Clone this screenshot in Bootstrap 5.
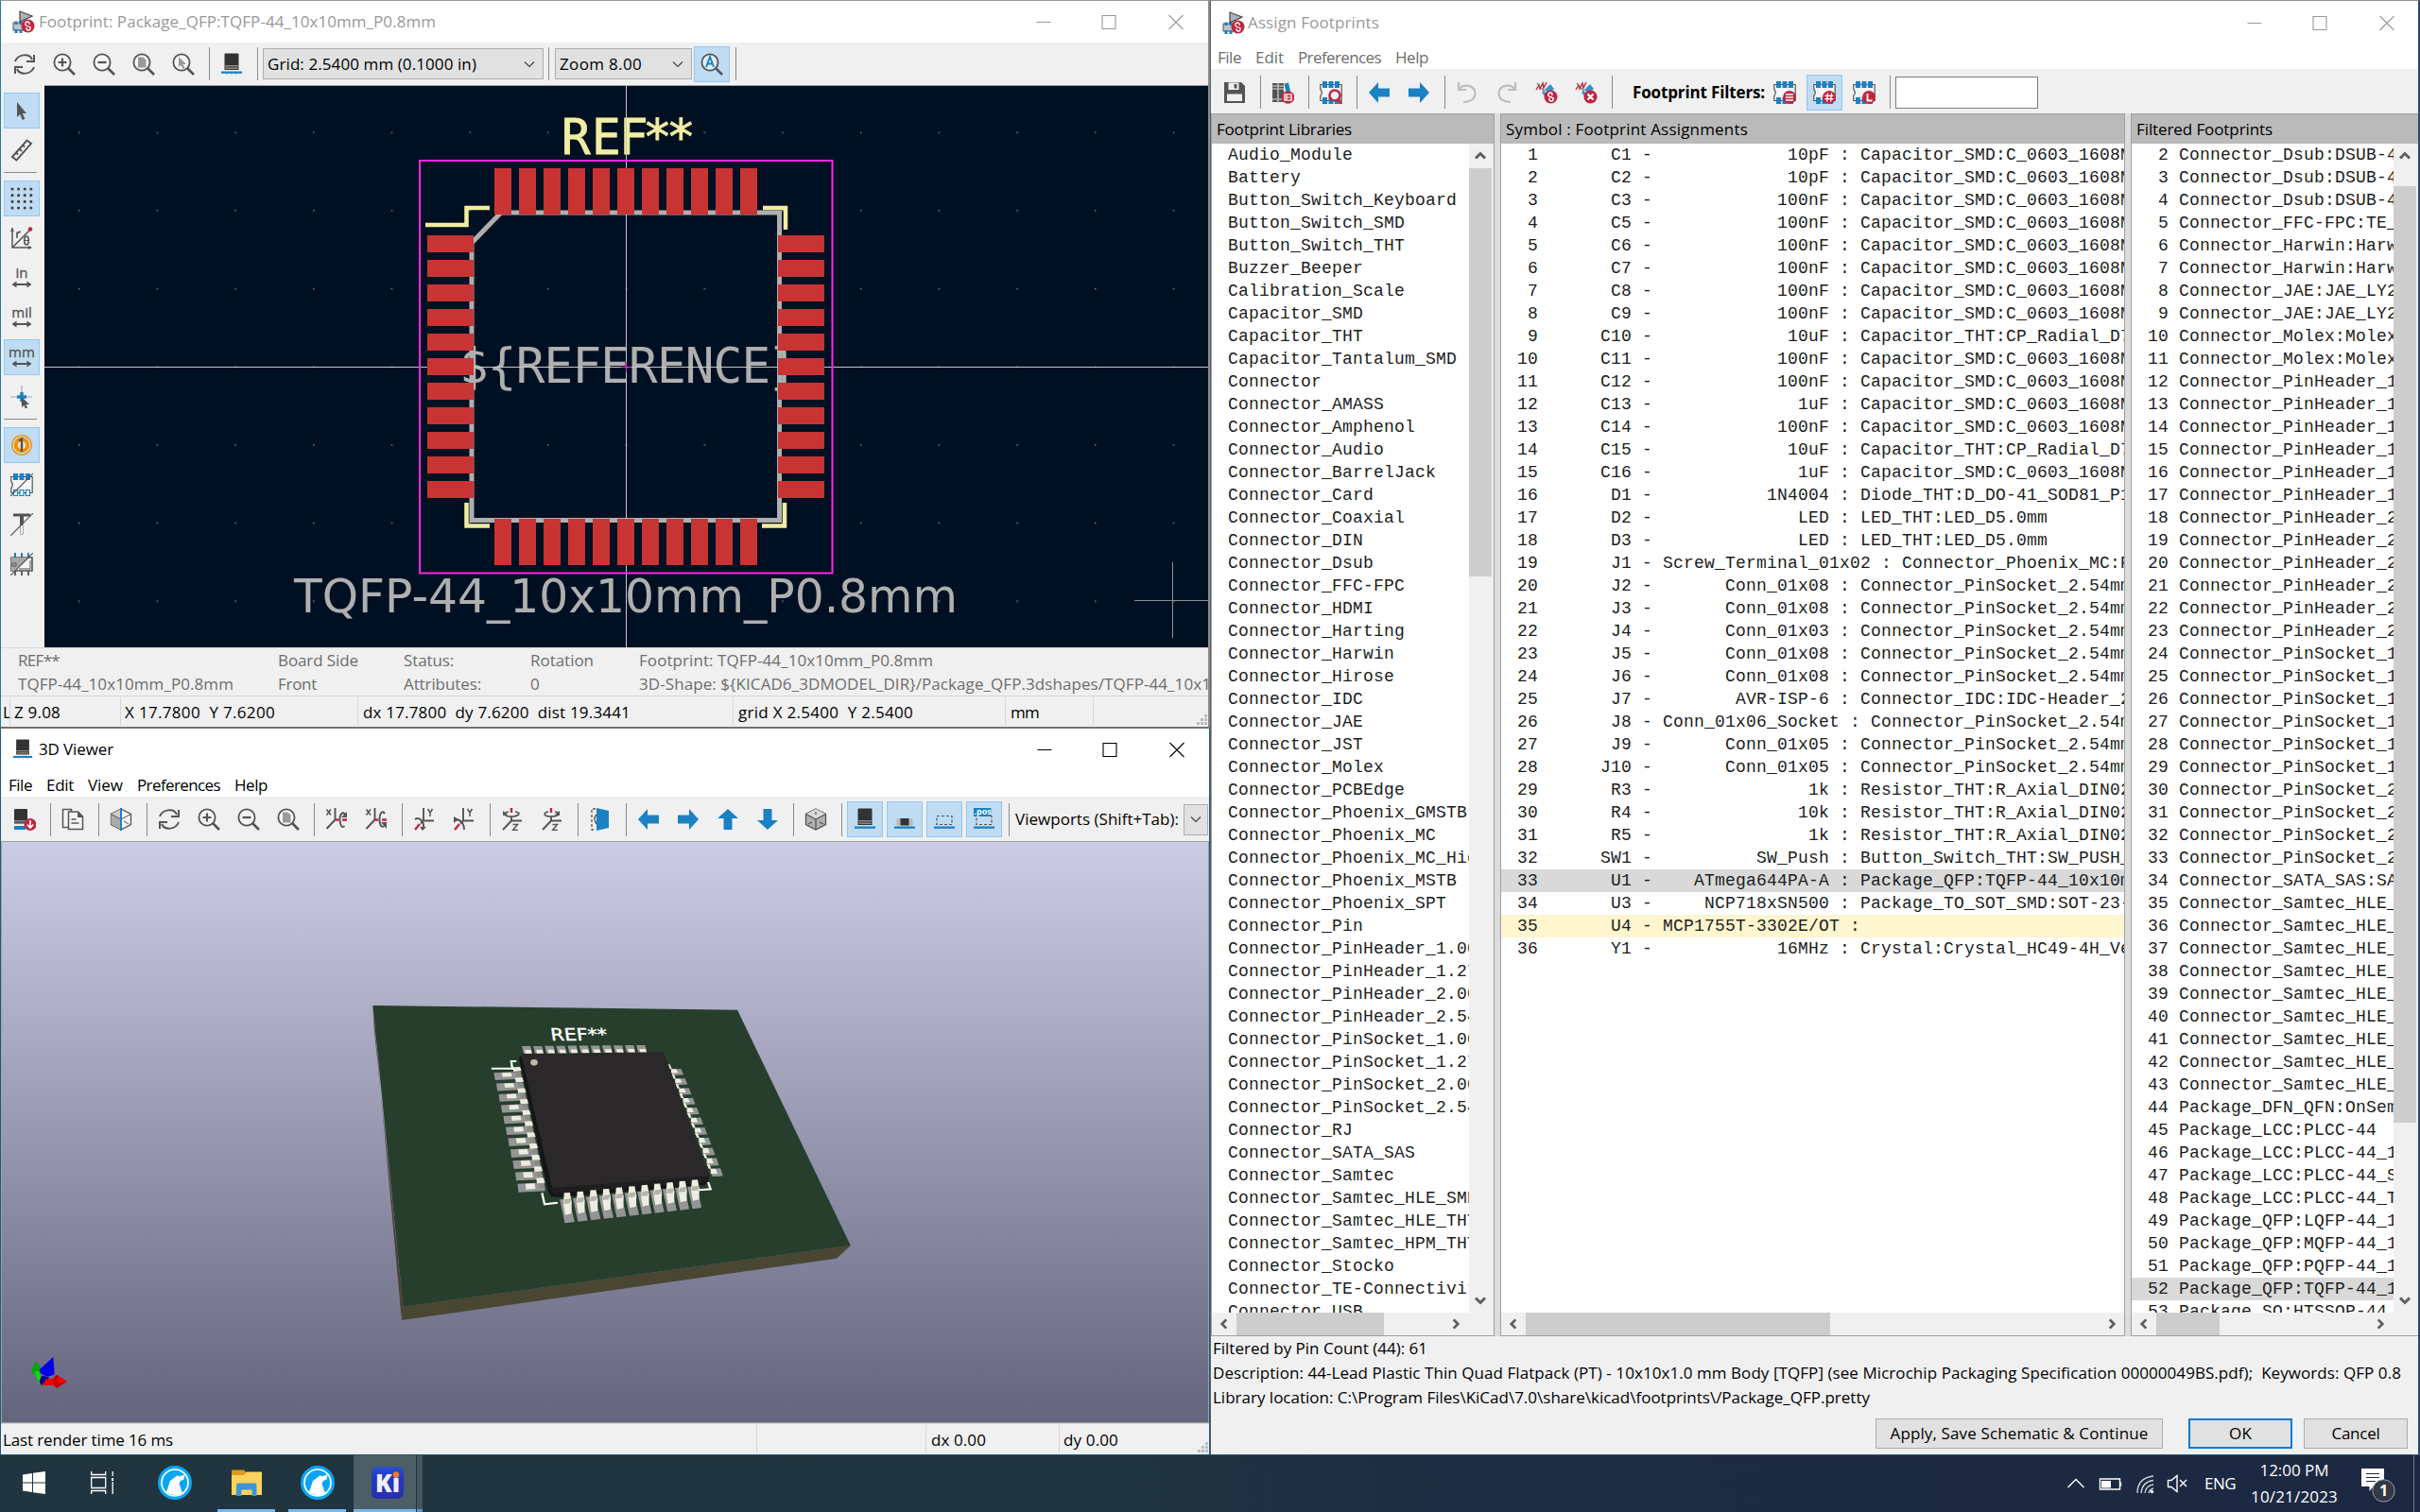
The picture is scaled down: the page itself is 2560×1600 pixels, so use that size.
<!DOCTYPE html>
<html lang="en">
<head>
<meta charset="utf-8">
<title>KiCad - Assign Footprints</title>
<link rel="stylesheet" href="https://cdn.jsdelivr.net/npm/bootstrap@5.3.0/dist/css/bootstrap.min.css">
<style>
html,body{width:2560px;height:1600px;overflow:hidden}
body{font-family:"Open Sans","Noto Sans",sans-serif;font-size:17px;line-height:24px;color:#000;background:#1f3440}
svg{display:block;flex:none}
.txt{white-space:pre;display:inline-block;flex:none}
.desk{height:1540px}
.leftcol{width:1280px}
.win{background:#f0f0f0;overflow:hidden}
.win-fp{height:771px;border-top:1px solid #9a9a9a;border-left:1px solid #2a76a0;border-right:2px solid #8c8c8c;border-bottom:2px solid #77706a}
.win-3d{height:769px;border-left:1px solid #1b5a7c;border-right:1px solid #1b5a7c;border-bottom:1px solid #1b5a7c}
.win-as{width:1280px;border-top:1px solid #8f8f8f;border-left:1px solid #55606a;border-right:2px solid #2c4678;border-bottom:1px solid #2a5580}
.titlebar{height:44px;background:#fff}
.off{color:#999}
.dim{color:#6d6d6d}
.menus{background:#fff}
.tools{gap:4px;padding-left:6px;flex:none}
.tb{width:38px;height:38px;flex:none;border:1px solid transparent}
.tb svg{overflow:visible}
.tb.on{background:#c0dcf3;border-color:#90c8f6}
.vsep{width:1px;height:35px;background:#8a8a8a;flex:none;margin:0 0 0 4px}
.hsep{width:35px;height:1px;background:#8a8a8a;flex:none}
.combo{height:33px;background:#e1e1e1;border:1px solid #adadad;flex:none}
.side{width:46px;padding:8px 0 0 3px;gap:4px;border-right:0;flex:none}
.info{height:51px;border-top:1px solid #dadada}
.info .txt{display:block;height:25px;line-height:26px}
.sbar{border-top:1px solid #d7d7d7;flex:none}
.sbar>div{height:30px;margin-top:1px;border-left:1px solid #d7d7d7;padding-left:5px;line-height:31px;flex:none}
.grip{width:14px;height:14px}
.panel{border:1px solid #a0a0a0;background:#f0f0f0;flex:none}
.phead{background:#bababa;height:31px;line-height:31px;padding-left:5px;flex:none}
.rows{background:#fff;font-family:"Liberation Mono",monospace;font-size:18px;letter-spacing:.2px;color:#1c1c1c;overflow:hidden;flex:none;height:1237px}
.rows div{height:24px;line-height:24px;white-space:pre}
.sel{background:#d9d9d9}
.warn{background:#fff5cf}
.vs{width:24px;height:1237px;flex:none}
.hs{height:24px;flex:none}
.thumb{background:#cdcdcd;flex:none}
.arr{flex:none;width:26px;height:26px}
.hs .arr{height:24px}
.b10{height:32px;line-height:30px;background:#e1e1e1;border:1px solid #adadad;border-radius:0;padding:0;font-size:17px;color:#000;flex:none}
.b10.def{border:2px solid #0078d7;line-height:28px}
.taskbar{height:60px;background:linear-gradient(90deg,#20353f 0,#203440 45%,#1c2c41 60%,#1c2842 100%);color:#fff}
.titem{height:60px;width:61px;flex:none;border-bottom:3px solid transparent}
.titem.run{border-color:#76b9ed}
.titem.act{background:#4d5f66;width:66px}
.fpsearch{width:151px;height:34px;border:1px solid #7a7a7a;background:#fff;border-radius:0}
</style>
<script src="https://cdn.jsdelivr.net/npm/bootstrap@5.3.0/dist/js/bootstrap.bundle.min.js"></script>
</head>
<body class="d-flex flex-column">

<svg width="0" height="0" class="position-absolute">
<defs>
<symbol id="refresh" viewBox="0 0 24 24"><g fill="none" stroke="#545454" stroke-width="2"><path d="M2 9C5 1 17 0 20 7M22 15C19 23 7 24 4 17"/><path d="M22 2v7h-8M2 22v-7h8"/></g></symbol>
<symbol id="lens" viewBox="0 0 24 24"><circle cx="10" cy="10" r="8.600" fill="#fafafa" fill-opacity=".6" stroke="#545454" stroke-width="1.800"/><path d="M16 16l7 7" stroke="#545454" stroke-width="2.600"/></symbol>
<symbol id="zin" viewBox="0 0 24 24"><use href="#lens"/><path d="M10 5.500v9M5.500 10h9" stroke="#545454" stroke-width="2.200"/></symbol>
<symbol id="zout" viewBox="0 0 24 24"><use href="#lens"/><path d="M5.500 10h9" stroke="#545454" stroke-width="2.200"/></symbol>
<symbol id="zfit" viewBox="0 0 24 24"><use href="#lens"/><path d="M6 4.500h5.500l3 3v8H6z" fill="#9a9a9a"/></symbol>
<symbol id="zsel" viewBox="0 0 24 24"><use href="#lens"/><path d="M7 4v11l2.500-2 2 4 2-1-2-4h3.500z" fill="#9a9a9a"/></symbol>
<symbol id="zauto" viewBox="0 0 24 24"><use href="#lens"/><path d="M6 15l4-11 4 11M7.300 11.500h5.400" fill="none" stroke="#1a81c4" stroke-width="1.900"/></symbol>
<symbol id="cap" viewBox="0 0 24 24"><path d="M7.500 19v5M12 19v5M16.500 19v5" stroke="#ccc" stroke-width="1"/><path d="M4.500 1.500q0-1 1-1h13q1 0 1 1V18h-15z" fill="#333"/><path d="M4.500 13h15v1.500h-15zM5.500 15.500h13V17h-13z" fill="#8a8a8a"/><path d="M1 19.500h22v2.300H1z" fill="#1a81c4"/></symbol>
<symbol id="capr" viewBox="0 0 24 24"><path d="M1 2q0-1 1-1h12q1 0 1 1v15H1z" fill="#333"/><path d="M1 13h14v1.500H1zM1 15.500h14V17H1z" fill="#8a8a8a"/><path d="M1 19h12v4H1z" fill="#1a81c4"/><circle cx="18" cy="17.500" r="6.500" fill="#bf2641"/><path d="M18 13v7.500M14.800 17.500L18 21l3.200-3.500" fill="none" stroke="#fff" stroke-width="1.600"/></symbol>
<symbol id="arrow" viewBox="0 0 24 24"><path d="M7 3v16l3.200-3 2.500 6 2.600-1.200-2.500-5.800H17z" fill="#545454"/></symbol>
<symbol id="ruler" viewBox="0 0 24 24"><g fill="none" stroke="#545454" stroke-width="1.900"><path d="M2 19L17.500 1.500 22 5 6.500 22.500z"/><path d="M6 14.500l2 2M9.500 10.500l2.500 2.500M13 6.500l2 2"/></g></symbol>
<symbol id="dots" viewBox="0 0 24 24"><g stroke="#444" stroke-width="3.200" stroke-linecap="round" stroke-dasharray="0 6.600"><path d="M2 2h20.500M2 8.700h20.500M2 15.300h20.500M2 22h20.500"/></g></symbol>
<symbol id="polar" viewBox="0 0 24 24"><path d="M2 1v21h20M2 22L21 3" fill="none" stroke="#545454" stroke-width="1.500"/><path d="M0 5l2-4 2 4zM19 20l4 2-4 2z" fill="#545454"/><circle cx="21" cy="2.500" r="2.300" fill="#bf2641"/><path d="M7 12V5.500M7 8q1-3 4-2.500" fill="none" stroke="#545454" stroke-width="1.600"/><ellipse cx="17" cy="14.500" rx="2.300" ry="4.500" fill="none" stroke="#545454" stroke-width="1.600"/><path d="M15 14.500h4" stroke="#545454"/></symbol>
<symbol id="dim" viewBox="0 0 24 24"><path d="M3 19h18" stroke="#545454" stroke-width="2"/><path d="M1.500 19l5-3.500v7zM22.500 19l-5-3.500v7z" fill="#545454"/></symbol>
<symbol id="snap" viewBox="0 0 24 24"><path d="M12 0v20M0 12h23" stroke="#aaa" stroke-width="1.200"/><path d="M12 7v10M7 12h10" stroke="#1a81c4" stroke-width="3.500"/><path d="M12 12v11l2.500-2 1.500 3.500 2-1-1.500-3.500H20z" fill="#545454"/></symbol>
<symbol id="padn" viewBox="0 0 24 24"><circle cx="12" cy="12" r="10.300" fill="none" stroke="#f29100" stroke-width="1.300"/><circle cx="12" cy="12" r="6.300" fill="#e9e3d6" stroke="#f29100" stroke-width="4"/><path d="M9 7.500l3-2V19" fill="none" stroke="#545454" stroke-width="2.400"/></symbol>
<symbol id="chip" viewBox="0 0 24 24"><path d="M.8 3.500h22.400v17H.8v-5q3-3.500 0-7z" fill="#f5f5f5" stroke="#545454" stroke-width="1.200"/><path d="M3 0h5v7H3zM9.500 0h5v7h-5zM16 0h5v7h-5zM3 17h5v7H3zM9.500 17h5v7h-5zM16 17h5v7h-5z" fill="#1a81c4"/></symbol>
<symbol id="padsk" viewBox="0 0 24 24"><path d="M.8 3.500h22.400v17H.8v-5q3-3.500 0-7z" fill="#f5f5f5" stroke="#545454" stroke-width="1.200"/><path d="M3 0h5v7H3zM9.500 0h5v7h-5zM16 0h5v7h-5z" fill="#1a81c4"/><path d="M3.500 17.500h4v6h-4zM10 17.500h4v6h-4zM16.500 17.500h4v6h-4z" fill="#fff" stroke="#1a81c4" stroke-width="1.200"/><path d="M0 24L24 0" stroke="#545454" stroke-width="1.200"/></symbol>
<symbol id="txtsk" viewBox="0 0 24 24"><path d="M3 2h18" stroke="#545454" stroke-width="3"/><path d="M12 2v11" stroke="#545454" stroke-width="4"/><path d="M10.500 13v9.500h3V10" fill="none" stroke="#aaa"/><path d="M0 24L24 0" stroke="#545454" stroke-width="1.200"/></symbol>
<symbol id="grask" viewBox="0 0 24 24"><path d="M5 0v6M12 0v6M19 0v6" stroke="#1a81c4" stroke-width="2"/><path d="M5 18v6M12 18v6M19 18v6" stroke="#545454" stroke-width="1.800"/><path d="M1 5h22v14H1z" fill="#f5f5f5" stroke="#545454" stroke-width="1.600"/><path d="M1 5h19L5 19H1z" fill="#a8a8a8"/><path d="M2 11h4v3H2zM9 17h12V8" fill="none" stroke="#545454"/><path d="M0 24L24 0" stroke="#545454" stroke-width="1.200"/></symbol>
<symbol id="copy" viewBox="0 0 24 24"><path d="M1.500 1.500h9v19h-9z" fill="#f5f5f5" stroke="#545454" stroke-width="1.500"/><path d="M7.500 4h10l5 5v13.500h-15z" fill="#f5f5f5" stroke="#545454" stroke-width="1.500"/><path d="M17 3.500V10h6z" fill="#545454"/><path d="M10.500 12h5M10.500 16h8" stroke="#545454" stroke-width="1.500"/></symbol>
<symbol id="cube1" viewBox="0 0 24 24"><path d="M12 1l10.500 5.500v11L12 23 1.500 17.500v-11z" fill="#f2f2f2" stroke="#545454" stroke-width="1.300"/><path d="M1.500 6.500L12 12v11L1.500 17.500z" fill="#aaa"/><path d="M1.500 6.500L12 1v11z" fill="#ccc"/><path d="M1.500 6.500L12 12l10.500-5.500M15 14l5 3" fill="none" stroke="#545454"/><path d="M12 0v24" stroke="#1a81c4" stroke-width="2"/></symbol>
<symbol id="cube2" viewBox="0 0 24 24"><path d="M12 1l10.500 5.500v11L12 23 1.500 17.500v-11z" fill="#b0b0b0" stroke="#545454" stroke-width="1.300"/><path d="M1.500 6.500L12 1l10.500 5.500L12 12z" fill="#dadada"/><path d="M1.500 6.500L12 12l10.500-5.500M12 12v11M4 17l4-2M20 17l-4-2M12 4v3" fill="none" stroke="#545454" stroke-width="1.200"/></symbol>
<symbol id="ax" viewBox="0 0 24 24"><path d="M10.500 0v13M10.500 12.500L1.500 22" stroke="#545454" stroke-width="1.900" fill="none"/><path d="M11 12.500h3.500M18 12.500h5" stroke="#bf2641" stroke-width="2.400"/><path d="M1.500 1.500l4.500 6M6 1.500l-4.500 6" stroke="#545454" stroke-width="1.500"/></symbol>
<symbol id="rx1" viewBox="0 0 24 24"><use href="#ax"/><path d="M21 7c-2-4-5.500-1-5.500 5s2.500 10 5 7" fill="none" stroke="#545454" stroke-width="1.900"/><path d="M23 4v6h-6z" fill="#545454"/></symbol>
<symbol id="rx2" viewBox="0 0 24 24"><use href="#ax"/><path d="M21 6c-2-4-5.500-1-5.500 6s2.500 9 5 7" fill="none" stroke="#545454" stroke-width="1.900"/><path d="M23 22v-7h-6z" fill="#545454"/></symbol>
<symbol id="ay" viewBox="0 0 24 24"><path d="M11 0v13.500h11M11 13.500l-3 3" stroke="#545454" stroke-width="1.900" fill="none"/><path d="M7 17l-5 6" stroke="#bf2641" stroke-width="2.400"/><path d="M15.500 1l2.500 4 2.500-4M18 5v4" fill="none" stroke="#545454" stroke-width="1.500"/></symbol>
<symbol id="ry1" viewBox="0 0 24 24"><use href="#ay"/><path d="M2 12c4-3 10 2 9 9" fill="none" stroke="#545454" stroke-width="1.900"/><path d="M7 20h7l-4 4z" fill="#545454"/></symbol>
<symbol id="ry2" viewBox="0 0 24 24"><use href="#ay"/><path d="M3 13c4-2 9 3 9 10" fill="none" stroke="#545454" stroke-width="1.900"/><path d="M1 16v-7l5 3z" fill="#545454"/></symbol>
<symbol id="az" viewBox="0 0 24 24"><path d="M11 0v5" stroke="#bf2641" stroke-width="2.400"/><path d="M11 9v4.500h11M11 13.500L2 23" stroke="#545454" stroke-width="1.900" fill="none"/><path d="M12.500 17.500h5l-5 6h5.500" fill="none" stroke="#545454" stroke-width="1.500"/></symbol>
<symbol id="rz1" viewBox="0 0 24 24"><use href="#az"/><path d="M8 4c-6 1-5 5 3 5s11-4 4-5" fill="none" stroke="#545454" stroke-width="1.700"/><path d="M2 8V3l5 4z" fill="#545454"/></symbol>
<symbol id="rz2" viewBox="0 0 24 24"><use href="#az"/><path d="M8 4c-6 1-5 5 3 5s11-4 4-5" fill="none" stroke="#545454" stroke-width="1.700"/><path d="M20 8V3l-5 4z" fill="#545454"/></symbol>
<symbol id="flip" viewBox="0 0 24 24"><path d="M7 1H3v22h4" fill="none" stroke="#545454" stroke-dasharray="3 2" stroke-width="1.300"/><path d="M8 0l13 3v18L8 24z" fill="#1a81c4"/><path d="M8 7q-4 4 0 10" fill="none" stroke="#545454" stroke-width="1.500"/></symbol>
<symbol id="aL" viewBox="0 0 24 24"><path d="M1 12L11 1v6.500h12v9H11V23z" fill="#1a81c4"/></symbol>
<symbol id="smd" viewBox="0 0 24 24"><path d="M3.500 11h17v7.500h-17z" fill="#bbb"/><path d="M7.500 11h9v7.500h-9z" fill="#333"/><path d="M1 19.500h22v2.300H1z" fill="#1a81c4"/></symbol>
<symbol id="virt" viewBox="0 0 24 24"><path d="M4 8.500h16v9H4z" fill="none" stroke="#545454" stroke-width="1.200" stroke-dasharray="3 2"/><path d="M1 19.500h22v2.300H1z" fill="#1a81c4"/></symbol>
<symbol id="pos" viewBox="0 0 24 24"><use href="#virt"/><path d="M1 0h18.500v9H1z" fill="#1a81c4"/><text x="1.500" y="7" font-size="9" font-weight="700" fill="#fff" font-family="Open Sans">.pos</text></symbol>
<symbol id="save" viewBox="0 0 24 24"><path d="M1 1h18l4 4v18H1z" fill="#545454"/><path d="M5.500 1.500h11V9h-11zM4 13.500h16V21H4z" fill="#f0f0f0"/><path d="M11.500 3h3v4.500h-3z" fill="#545454"/></symbol>
<symbol id="libs" viewBox="0 0 24 24"><path d="M1 2h5.500v20H1zM7.500 2H13v20H7.500z" fill="#545454"/><path d="M1 5h5.500M1 8h5.500M7.500 5H13M7.500 8H13M1 19h5.500M7.500 19H13" stroke="#ddd" stroke-width="1"/><path d="M13.500 2.500L18 1.500 22 19h-5z" fill="#1a81c4"/><circle cx="17.500" cy="17" r="6.800" fill="#bf2641"/><path d="M13.800 13.800h7.400v6.400h-7.400zM13.800 17h7.400M16 14v6" fill="none" stroke="#fff" stroke-width="1.200"/></symbol>
<symbol id="find" viewBox="0 0 24 24"><use href="#chip"/><circle cx="16" cy="15" r="5.500" fill="#f5f5f5" stroke="#bf2641" stroke-width="2.600"/><path d="M19.500 19l4 5" stroke="#bf2641" stroke-width="2.800"/></symbol>
<symbol id="undo" viewBox="0 0 24 24"><path d="M3 1v8h8M3.500 8.500C8 2 20 4 20.500 12.500c0 7-6 9.500-12.500 9.500" fill="none" stroke="#bdbdbd" stroke-width="2.200"/></symbol>
<symbol id="wire" viewBox="0 0 24 24"><path d="M1 9l3-5 1 4 3-6 1 5 3-6" fill="none" stroke="#bf2641" stroke-width="1.400"/><path d="M2 2l8 9" stroke="#777" stroke-width="1.200"/><path d="M7 12l9-9 4 5-9 9z" fill="#1a81c4" opacity=".85"/><path d="M10 10l6 5" stroke="#f0f0f0" stroke-width="1.500"/><circle cx="16.500" cy="16.500" r="7" fill="#bf2641"/></symbol>
<symbol id="wlink" viewBox="0 0 24 24"><use href="#wire"/><path d="M14 16v-2q0-2 2-2t2 2v1M15 18v1q0 2 2 2t2-2v-2M14.500 16l4 1.500" fill="none" stroke="#fff" stroke-width="1.500"/></symbol>
<symbol id="wdel" viewBox="0 0 24 24"><use href="#wire"/><path d="M13.500 13.500l6 6M19.500 13.500l-6 6" stroke="#fff" stroke-width="2.200"/></symbol>
<symbol id="f1" viewBox="0 0 24 24"><use href="#chip"/><circle cx="17" cy="17" r="7" fill="#bf2641"/><path d="M13 14h8M13 17h8M13 20h8" stroke="#fff" stroke-width="1.500"/></symbol>
<symbol id="f2" viewBox="0 0 24 24"><use href="#chip"/><circle cx="17" cy="17" r="7" fill="#bf2641"/><path d="M15.500 12.500l-.8 9M19.500 12.500l-.8 9M12.500 15.300h9M12.500 18.700h9" stroke="#fff" stroke-width="1.300"/></symbol>
<symbol id="f3" viewBox="0 0 24 24"><use href="#chip"/><circle cx="17" cy="17" r="7" fill="#bf2641"/><path d="M15.500 13v7.500h5" fill="none" stroke="#fff" stroke-width="1.800"/></symbol>
<symbol id="app" viewBox="0 0 24 24"><path d="M1 13h17v8H1z" fill="#b9c4cc" stroke="#545454"/><path d="M2.500 11.500h3v3.500h-3zM7.500 11.500h3v3.500h-3zM2.500 20h3v4h-3zM7.500 20h3v4h-3z" fill="#1a81c4"/><path d="M8 1v11L21 6z" fill="#a9b4bc" stroke="#444" stroke-width="1.200"/><circle cx="16.500" cy="16.500" r="7" fill="#bf2641"/><path d="M14 16v-2q0-2 2-2t2 2v1M15 18v1q0 2 2 2t2-2v-2M14.500 16l4 1.500" fill="none" stroke="#fff" stroke-width="1.300"/></symbol>
<symbol id="chev" viewBox="0 0 12 12"><path d="M1 3.500l5 5 5-5" fill="none" stroke="#444" stroke-width="1.200"/></symbol>
<symbol id="sarr" viewBox="0 0 26 26"><path d="M8 15.500l5-5 5 5" fill="none" stroke="#5e5e5e" stroke-width="3"/></symbol>
<symbol id="wctl" viewBox="0 0 210 44"><path d="M28.500 22.500h15M98 15.500h14v14H98zM168.500 15l15 15M183.500 15l-15 15" fill="none" stroke="currentColor" stroke-width="1.100"/></symbol>
<symbol id="wolf" viewBox="0 0 36 36"><circle cx="18" cy="18" r="18" fill="#0aa5f5"/><circle cx="18" cy="18" r="14" fill="none" stroke="#fff" stroke-width="1.700"/><path d="M9 28l4-12 6-4.500 2-1.500 1 1.500 6.500-2-1 5-3.500 1.500-1.500 3 3.500 10q-8 5-17-1z" fill="#fff"/></symbol>
<symbol id="grip" viewBox="0 0 14 14"><path d="M10 2h3v3h-3zM10 6h3v3h-3zM10 10h3v3h-3zM6 6h3v3H6zM6 10h3v3H6zM2 10h3v3H2z" fill="#bdbdbd"/></symbol>
</defs>
</svg>

<main class="desk d-flex">
<section class="leftcol d-flex flex-column flex-shrink-0">

<div class="win win-fp d-flex flex-column flex-shrink-0">
  <div class="titlebar d-flex align-items-center off flex-shrink-0">
    <svg class="ms-2 ps-1" width="28" height="24"><use href="#app" width="24" height="24"/></svg>
    <span class="txt" style="margin-left:4px" data-w="420">Footprint: Package_QFP:TQFP-44_10x10mm_P0.8mm</span>
    <svg class="ms-auto" width="210" height="44"><use href="#wctl"/></svg>
  </div>
  <div class="tools d-flex align-items-center" style="height:45px">
    <span class="tb" data-i="refresh"></span><span class="tb" data-i="zin"></span><span class="tb" data-i="zout"></span><span class="tb" data-i="zfit"></span><span class="tb" data-i="zsel"></span>
    <i class="vsep"></i><span class="tb" data-i="cap"></span><i class="vsep"></i>
    <span class="combo d-flex align-items-center justify-content-between ps-1 pe-2" style="width:297px;margin:0 -3px 0 1px"><span class="txt" data-w="221">Grid: 2.5400 mm (0.1000 in)</span><svg width="12" height="12"><use href="#chev"/></svg></span>
    <i class="vsep"></i>
    <span class="combo d-flex align-items-center justify-content-between ps-1 pe-2" style="width:145px;margin-left:2px"><span class="txt" data-w="87">Zoom 8.00</span><svg width="12" height="12"><use href="#chev"/></svg></span>
    <span class="tb on" data-i="zauto" style="margin-left:-2px"></span><i class="vsep" style="margin-left:2px"></i>
  </div>
  <div class="d-flex" style="height:595px">
    <div class="side d-flex flex-column">
      <span class="tb on" data-i="arrow"></span><span class="tb" data-i="ruler"></span>
      <i class="hsep mb-1"></i>
      <span class="tb on" data-i="dots"></span><span class="tb" data-i="polar"></span>
      <span class="tb" data-i="dim" data-t="in"></span><span class="tb" data-i="dim" data-t="mil"></span><span class="tb on" data-i="dim" data-t="mm"></span>
      <span class="tb" data-i="snap"></span>
      <i class="hsep mb-1"></i>
      <span class="tb on" data-i="padn"></span><span class="tb" data-i="padsk"></span><span class="tb" data-i="txtsk"></span><span class="tb" data-i="grask"></span>
    </div>
    <svg id="pcb" width="1231" height="595" viewBox="47 90 1231 595" style="background:#001023">
      <defs><pattern id="gd" x="82.900" y="139.500" width="82.700" height="82.650" patternUnits="userSpaceOnUse"><path d="M0 0h1.500v1.500H0z" fill="#7a8088"/></pattern></defs>
      <path d="M47 90h1231v595H47z" fill="url(#gd)"/>
      <path d="M47 90.500h1231" stroke="#a0a0a0"/>
      <g fill="none" stroke="#afafaf" stroke-width="5"><path d="M530 225H824.500V550.500H499V257z"/></g>
      <g font-family="DejaVu Sans Mono" font-size="51" fill="#afafaf">
        <text x="486" y="405" textLength="359">${REFERENCE}</text>
        <text x="311" y="648" textLength="702" lengthAdjust="spacingAndGlyphs" font-family="DejaVu Sans" font-size="50.500">TQFP-44_10x10mm_P0.8mm</text>
        <text x="594 626 655 680 705" y="163" fill="#f2eda1" stroke="#f2eda1" stroke-width=".8">REF**</text>
      </g>
      <g fill="none" stroke="#f2eda1" stroke-width="4.500"><path d="M450 238h43.500v-18H518M807 220h24v23M493.500 532v24.500H518M806 556.500h24V532"/></g>
      <path d="M47 388.500h1231M662.500 90v595" stroke="#c8c8c8"/>
      <path d="M657 388.500h11M662.500 383v11" stroke="#ff26e2"/>
      <g id="pads" fill="#c83434"></g>
      <path d="M444 170h436.500v436.500H444z" fill="none" stroke="#ff26e2" stroke-width="2"/>
      <path d="M1200 635.500h78M1240.500 595v80" stroke="#8b9096"/>
    </svg>
  </div>
  <div class="info d-flex dim">
    <div style="width:275px;padding-left:18px"><span class="txt" data-w="44">REF**</span><span class="txt" data-w="228">TQFP-44_10x10mm_P0.8mm</span></div>
    <div style="width:133px;padding-left:18px"><span class="txt" data-w="85">Board Side</span><span class="txt" data-w="41">Front</span></div>
    <div style="width:134px;padding-left:18px"><span class="txt" data-w="53">Status:</span><span class="txt" data-w="82">Attributes:</span></div>
    <div style="width:115px;padding-left:18px"><span class="txt" data-w="67">Rotation</span><span class="txt">0</span></div>
    <div style="width:615px;padding-left:18px"><span class="txt" data-w="311">Footprint: TQFP-44_10x10mm_P0.8mm</span><span class="txt" data-w="605">3D-Shape: ${KICAD6_3DMODEL_DIR}/Package_QFP.3dshapes/TQFP-44_10x1</span></div>
  </div>
  <div class="sbar d-flex" style="height:33px">
    <div style="width:9px;border:0;padding-left:2px">L</div>
    <div style="width:117px;padding-left:4px"><span class="txt" data-w="49">Z 9.08</span></div>
    <div style="width:251px;padding-left:4px"><span class="txt" data-w="159">X 17.7800  Y 7.6200</span></div>
    <div style="width:397px"><span class="txt" data-w="283">dx 17.7800  dy 7.6200  dist 19.3441</span></div>
    <div style="width:288px"><span class="txt" data-w="185">grid X 2.5400  Y 2.5400</span></div>
    <div style="width:93px"><span class="txt" data-w="30">mm</span></div>
    <div class="flex-fill d-flex justify-content-end align-items-end"><svg class="grip"><use href="#grip"/></svg></div>
  </div>
</div>

<div class="win win-3d d-flex flex-column flex-shrink-0">
  <div class="titlebar d-flex align-items-center flex-shrink-0">
    <svg class="ms-2 ps-1" width="28" height="24"><use href="#cap" width="22" height="24"/></svg>
    <span class="txt" style="margin-left:4px" data-w="79">3D Viewer</span>
    <svg class="ms-auto" width="210" height="44"><use href="#wctl"/></svg>
  </div>
  <div class="menus d-flex flex-shrink-0" style="height:28px;line-height:31px;padding-left:8px;gap:15px"><span class="txt" data-w="25">File</span><span class="txt" data-w="29">Edit</span><span class="txt" data-w="37">View</span><span class="txt" data-w="88">Preferences</span><span class="txt" data-w="35">Help</span></div>
  <div class="tools d-flex align-items-center" style="height:47px;padding-top:1px">
    <span class="tb" data-i="capr"></span><i class="vsep"></i><span class="tb" data-i="copy"></span><i class="vsep"></i><span class="tb" data-i="cube1"></span><i class="vsep"></i>
    <span class="tb" data-i="refresh"></span><span class="tb" data-i="zin"></span><span class="tb" data-i="zout"></span><span class="tb" data-i="zfit"></span><i class="vsep"></i>
    <span class="tb" data-i="rx1"></span><span class="tb" data-i="rx2"></span><i class="vsep"></i><span class="tb" data-i="ry1"></span><span class="tb" data-i="ry2"></span><i class="vsep"></i><span class="tb" data-i="rz1"></span><span class="tb" data-i="rz2"></span><i class="vsep"></i>
    <span class="tb" data-i="flip"></span><i class="vsep"></i>
    <span class="tb" data-i="aL"></span><span class="tb" data-i="aL" data-r="180"></span><span class="tb" data-i="aL" data-r="90"></span><span class="tb" data-i="aL" data-r="270"></span><i class="vsep"></i>
    <span class="tb" data-i="cube2"></span><i class="vsep"></i>
    <span class="tb on" data-i="cap" style="margin-left:1px"></span><span class="tb on" data-i="smd"></span><span class="tb on" data-i="virt"></span><span class="tb on" data-i="pos"></span><i class="vsep" style="margin-left:3px"></i>
    <span class="txt" style="margin-left:2px" data-w="173">Viewports (Shift+Tab):</span>
    <span class="combo d-flex align-items-center justify-content-center" style="width:26px;margin-left:1px"><svg width="12" height="12"><use href="#chev"/></svg></span>
  </div>
  <svg id="view3d" width="1278" height="616" viewBox="1 890 1278 616">
    <defs><linearGradient id="sky" x1="0" y1="0" x2="0" y2="1"><stop offset="0" stop-color="#cccce5"/><stop offset="1" stop-color="#64647d"/></linearGradient></defs>
    <path d="M1 890h1278v616H1z" fill="url(#sky)"/><path d="M1.500 1505.500V890.500h1277v615z" fill="none" stroke="#a0a0a0"/>
    <g transform="translate(340,1030) scale(.38265,.33333)">
      <path d="M142 102L146 180 226 1058 222 1101z" fill="#4b3f33"/>
      <path d="M226 1058L1463 864 1424 905 222 1101z" fill="#494632"/>
      <path d="M142 102L1150 116 1463 864 226 1058z" fill="#273e2d"/>
      <text transform="matrix(1,0,.12,1,636,212)" font-family="DejaVu Sans" font-size="54" fill="#fff" textLength="156" lengthAdjust="spacingAndGlyphs" stroke="#fff" stroke-width="1.200">REF**</text>
      <g id="leads"></g>
      <path d="M546 268L560 256 940 290 1072 640 1070 660 1060 672 650 712 634 708 626 690z" fill="#161616"/>
      <path d="M632 680L1070 640 1070 660 1062 664 644 699z" fill="#1f1e1f"/>
      <path d="M553 262L560 255 942 250 949 258 1071 639 1066 643 646 681 637 678z" fill="#2b2829"/>
      <circle cx="588" cy="283" r="10" fill="#bdb9a2"/>
      <g id="leads2"></g>
      <g fill="none" stroke="#fff" stroke-width="6"><path d="M470 302h60M528 306l-3-27h14M610 697l7 36 36-5M1045 688l31-3-7-22"/></g>
    </g>
    <g transform="translate(0,1410) scale(.40816,.33333)">
      <path d="M92 93l13 14-2 20-18 5-4-12z" fill="#00a800"/><path d="M90 125l12-3 8 40-8 3z" fill="#00e400"/>
      <path d="M102 155l6-18 20 4-12 27q-12 2-14-13z" fill="#000094"/><path d="M138 78l3 55q-18 14-36-4-6-6 0-14z" fill="#0000e8"/>
      <path d="M108 168l12-20 25-1v21z" fill="#f00000"/><path d="M146 134l28 21-27 22-8-10V145z" fill="#c40000"/><path d="M150 140l24 15-24 8z" fill="#f00"/>
    </g>
  </svg>
  <div class="sbar d-flex" style="height:33px">
    <div style="width:799px;border:0;padding-left:2px"><span class="txt" data-w="180">Last render time 16 ms</span></div>
    <div style="width:179px"></div>
    <div style="width:141px"><span class="txt" data-w="58">dx 0.00</span></div>
    <div class="flex-fill d-flex justify-content-between" style="padding-left:4px"><span class="txt" data-w="58">dy 0.00</span><svg class="grip align-self-end"><use href="#grip"/></svg></div>
  </div>
</div>
</section>

<section class="win win-as d-flex flex-column">
  <div class="titlebar d-flex align-items-center off flex-shrink-0" style="height:45px">
    <svg class="ms-2 ps-1" width="28" height="24"><use href="#app" width="24" height="24"/></svg>
    <span class="txt" style="margin-left:3px" data-w="139">Assign Footprints</span>
    <svg class="ms-auto" width="210" height="44" style="margin-right:-1px"><use href="#wctl"/></svg>
  </div>
  <div class="menus d-flex dim flex-shrink-0" style="height:27px;padding-left:7px;gap:15px;line-height:30px"><span class="txt" data-w="25">File</span><span class="txt" data-w="30">Edit</span><span class="txt" data-w="88">Preferences</span><span class="txt" data-w="35">Help</span></div>
  <div class="tools d-flex align-items-center" style="height:47px;padding-top:2px">
    <span class="tb" data-i="save"></span><i class="vsep"></i><span class="tb" data-i="libs"></span><i class="vsep"></i><span class="tb" data-i="find"></span><i class="vsep"></i>
    <span class="tb" data-i="aL"></span><span class="tb" data-i="aL" data-r="180"></span><i class="vsep"></i>
    <span class="tb" data-i="undo"></span><span class="tb" data-i="undo" data-f="1"></span><span class="tb" data-i="wlink"></span><span class="tb" data-i="wdel"></span><i class="vsep"></i>
    <span class="txt fw-bold" style="margin:0 -2px 0 17px" data-w="140">Footprint Filters:</span>
    <span class="tb" data-i="f1"></span><span class="tb on" data-i="f2"></span><span class="tb" data-i="f3"></span><i class="vsep"></i>
    <input class="fpsearch" style="margin-left:1px" type="text">
  </div>
  <div class="d-flex" style="background:#dcdcdc;height:1294px;gap:6px">
    <div class="panel d-flex flex-column" style="width:300px">
      <div class="phead"><span class="txt" data-w="143">Footprint Libraries</span></div>
      <div class="d-flex"><div class="rows" id="libs-list" style="width:272px;padding-left:17px"></div>
        <div class="vs d-flex flex-column align-items-center"><svg class="arr"><use href="#sarr"/></svg><div class="thumb w-100" style="height:432px"></div><svg class="arr mt-auto" style="transform:rotate(180deg)"><use href="#sarr"/></svg></div></div>
      <div class="hs d-flex"><svg class="arr" style="transform:rotate(-90deg)"><use href="#sarr"/></svg><div class="thumb" style="width:156px"></div><svg class="arr ms-auto" style="transform:rotate(90deg);margin-right:27px"><use href="#sarr"/></svg></div>
    </div>
    <div class="panel d-flex flex-column" style="width:661px">
      <div class="phead"><span class="txt" data-w="256">Symbol : Footprint Assignments</span></div>
      <div class="rows" id="sym-list"></div>
      <div class="hs d-flex"><svg class="arr" style="transform:rotate(-90deg)"><use href="#sarr"/></svg><div class="thumb" style="width:322px"></div><svg class="arr ms-auto" style="transform:rotate(90deg)"><use href="#sarr"/></svg></div>
    </div>
    <div class="panel d-flex flex-column" style="width:305px">
      <div class="phead"><span class="txt" data-w="144">Filtered Footprints</span></div>
      <div class="d-flex"><div class="rows" id="fp-list" style="width:277px"></div>
        <div class="vs d-flex flex-column align-items-center"><svg class="arr"><use href="#sarr"/></svg><div class="thumb w-100" style="height:991px;margin-top:19px"></div><svg class="arr mt-auto" style="transform:rotate(180deg)"><use href="#sarr"/></svg></div></div>
      <div class="hs d-flex"><svg class="arr" style="transform:rotate(-90deg)"><use href="#sarr"/></svg><div class="thumb" style="width:67px"></div><svg class="arr ms-auto" style="transform:rotate(90deg);margin-right:27px"><use href="#sarr"/></svg></div>
    </div>
  </div>
  <div class="d-flex flex-column flex-shrink-0" style="line-height:26px;height:87px;padding-left:2px">
    <span><span class="txt" data-w="227">Filtered by Pin Count (44): 61</span></span>
    <span><span class="txt" data-w="1257">Description: 44-Lead Plastic Thin Quad Flatpack (PT) - 10x10x1.0 mm Body [TQFP] (see Microchip Packaging Specification 00000049BS.pdf);  Keywords: QFP 0.8</span></span>
    <span><span class="txt" data-w="695">Library location: C:\Program Files\KiCad\7.0\share\kicad\footprints\/Package_QFP.pretty</span></span>
  </div>
  <div class="d-flex justify-content-end" style="padding-right:11px">
    <button class="btn b10" style="width:304px"><span class="txt" data-w="273">Apply, Save Schematic &amp; Continue</span></button>
    <button class="btn b10 def" style="width:110px;margin:0 12px 0 27px"><span class="txt" data-w="24">OK</span></button>
    <button class="btn b10" style="width:110px"><span class="txt" data-w="51">Cancel</span></button>
  </div>
</section>
</main>

<footer class="taskbar d-flex flex-shrink-0">
  <div class="titem d-flex align-items-center justify-content-center" style="width:72px"><svg width="24" height="24" viewBox="0 0 24 24"><path d="M0 3.500L10 2v9.500H0zM11 1.800L24 0v11.500H11zM0 12.500h10V22L0 20.500zM11 12.500h13V24l-13-1.800z" fill="#fff"/></svg></div>
  <div class="titem d-flex align-items-center justify-content-center" style="width:72px"><svg width="24" height="24" viewBox="0 0 24 24"><path d="M.7 0v3.500h15V0M.7 6.500h15v11H.7zM.7 24v-3.500h15V24M23.200 0v5M23.200 11v13" fill="none" stroke="#fff" stroke-width="1.300"/><path d="M22 7h2.500v3H22z" fill="#fff"/></svg></div>
  <div class="titem d-flex align-items-center justify-content-center" style="width:61px;margin:0 15px 0 10px"><svg width="36" height="36"><use href="#wolf"/></svg></div>
  <div class="titem run d-flex align-items-center justify-content-center" style="margin-right:14px"><svg width="32" height="28" viewBox="0 0 32 28"><path d="M0 2q0-1.500 1.500-1.500H13L15.500 3H32v10H0z" fill="#dd9a12"/><path d="M0 6h13l3-3.500h16V27H0z" fill="#fdd35e"/><path d="M5 28V17q0-2.500 2.500-2.500h16.500q2.500 0 2.500 2.500v11h-5v-6.500h-11V28z" fill="#3f95d8"/></svg></div>
  <div class="titem run d-flex align-items-center justify-content-center" style="margin-right:8px"><svg width="36" height="36"><use href="#wolf"/></svg></div>
  <div class="titem run act d-flex align-items-center justify-content-center"><svg width="34" height="34" viewBox="0 0 34 34" style="margin-left:5px"><defs><linearGradient id="kg" x1="0" y1="0" x2="0" y2="1"><stop offset="0" stop-color="#2a50cf"/><stop offset=".3" stop-color="#2438c8"/><stop offset="1" stop-color="#2b2fa8"/></linearGradient></defs><rect width="34" height="34" rx="6" fill="url(#kg)"/><text x="4" y="27" font-family="Open Sans" font-weight="800" font-size="26" fill="#eef" textLength="26" lengthAdjust="spacingAndGlyphs">Ki</text><circle cx="26" cy="8.500" r="3.200" fill="#f57c14"/></svg></div>
  <div class="titem run" style="width:6px;margin-left:1px;background:#44555d;border-color:#5b93c4"></div>
  <div class="ms-auto d-flex align-items-center">
    <svg width="150" height="40" viewBox="2180 1550 150 40"><g fill="none" stroke="#fff" stroke-width="1.400"><path d="M2187.500 1574l8.500-8.500 8.500 8.500M2221.500 1565h21v11h-21zM2243.500 1568.500v4"/><path d="M2303 1561.500v17l-6-5h-3.500v-7h3.500zM2306 1566l7 7M2313 1566l-7 7"/><path d="M2261 1580q0-16 17-18M2265 1580q1-12 13-13.500M2269 1580q1-8 9-9M2273 1580q1-4 5-5" stroke="#c9d0d8"/></g><path d="M2223 1567h10v7.500h-10z" fill="#fff"/><circle cx="2276.500" cy="1578.500" r="1.700" fill="#fff"/></svg>
    <span class="txt" style="margin-left:2px" data-w="33">ENG</span>
    <div class="text-center" style="width:94px;margin-left:15px;margin-right:2px;line-height:28px"><span class="txt" data-w="73">12:00 PM</span><span class="txt" data-w="92">10/21/2023</span></div>
    <svg width="42" height="44" viewBox="2494 1552 42 44" style="margin-left:18px"><path d="M2498 1558h24v19h-11.500l-4 5v-5h-8.500z" fill="#fff"/><path d="M2503 1563.500h14M2503 1567.500h14M2503 1571.500h10" stroke="#1c2842" stroke-width="1.200"/><circle cx="2521.500" cy="1581.500" r="11.700" fill="#343a45" stroke="#9a9ea5"/><text x="2521.500" y="1587" text-anchor="middle" font-family="Open Sans" font-weight="700" font-size="16" fill="#fff">1</text></svg>
    <div style="width:1px;height:60px;background:#6f7a8c;margin:0 6px 0 17px"></div>
  </div>
</footer>

<script>
// toolbar icons
document.querySelectorAll('[data-i]').forEach(b=>{
  const d=b.dataset;
  b.classList.add('d-flex','align-items-center','justify-content-center');
  let s='';
  if(d.r)s='transform:rotate('+d.r+'deg)';
  if(d.f)s='transform:scaleX(-1)';
  b.innerHTML='<svg width="24" height="24" viewBox="0 0 24 24" style="'+s+'"><use href="#'+d.i+'"/>'+
    (d.t?'<text x="12" y="12" text-anchor="middle" font-family="Open Sans" font-size="15" fill="#545454" stroke="#545454" stroke-width=".3">'+d.t+'</text>':'')+'</svg>';
});
// copper pads of the QFP-44
let p='';
for(let i=0;i<11;i++){
  const o=i*26;
  p+=`<path d="M${523+o} 178h18v49h-18zM${523+o} 549h18v49h-18zM452 ${249+o}h49v18h-49zM823 ${249+o}h49v18h-49z"/>`;
}
document.getElementById('pads').innerHTML=p;
// 3D pins
const q=(pts,f)=>`<path d="M${pts.map(a=>a.map(n=>n.toFixed(1)).join(' ')).join('L')}z" fill="${f}"/>`;
const box=(x,y,w,h,k,f)=>q([[x,y],[x+w,y],[x+w+k,y+h],[x+k,y+h]],f);
const G='#959595',W='#eeece0';
let a='',c='';
for(let i=0;i<11;i++){
  const t=i/10;
  // back row
  const bx=554+i*31.7;
  a+=box(bx,231-i*.3,24,28,6,G)+box(bx+8,243-i*.3,17,14,3,W);
  // left row
  const lx=477+i*6.5,ly=315+i*34.2+i*(i-10)*.16+t*10;
  a+=q([[lx,ly+1],[lx+73,ly-3],[lx+77,ly+20+t*4],[lx+3,ly+24+t*4]],G);
  c+=q([[lx+22,ly+1],[lx+47,ly],[lx+50,ly+12+t*5],[lx+24,ly+14+t*5]],W)
    +q([[lx+60,ly-2],[lx+73,ly-2],[lx+77,ly+14],[lx+62,ly+15]],'#8b8a84')
    +q([[lx+52,ly-17],[lx+72,ly-18],[lx+76,ly-5+t*3],[lx+54,ly-3+t*3]],W);
  // right row
  const rx=966+i*10.9,ry=304+i*31.6+t*(t-1)*14;
  a+=q([[rx,ry+1],[rx+28,ry-1],[rx+35,ry+18+t*5],[rx+6,ry+20+t*5]],G)
    +q([[rx-10,ry-15],[rx-3,ry-15],[rx+3,ry],[rx-4,ry]],W)
    +q([[rx+1,ry],[rx+15,ry],[rx+20,ry+12+t*4],[rx+1,ry+13+t*4]],W);
  // front row
  const fx=659+i*36.3-t*t*10,fy=718-i*4.1;
  a+=q([[fx,fy],[fx+26,fy-2],[fx+41-t*2,fy+71-t*4],[fx+14,fy+75-t*4]],G);
  c+=q([[fx+12,fy-21],[fx+28,fy-22],[fx+33,fy+8],[fx+32,fy+45-t*4],[fx+15,fy+49-t*4],[fx+10,fy+14]],W)
    +q([[fx+14,fy-1],[fx+32,fy-3],[fx+28,fy+12],[fx+10,fy+14]],'#b5b3aa');
}
document.getElementById('leads').innerHTML=a;
document.getElementById('leads2').innerHTML=c;
// lists
const C='Connector_';
const libs=['Audio_Module','Battery','Button_Switch_Keyboard','Button_Switch_SMD','Button_Switch_THT','Buzzer_Beeper','Calibration_Scale','Capacitor_SMD','Capacitor_THT','Capacitor_Tantalum_SMD','Connector',
 ...['AMASS','Amphenol','Audio','BarrelJack','Card','Coaxial','DIN','Dsub','FFC-FPC','HDMI','Harting','Harwin','Hirose','IDC','JAE','JST','Molex','PCBEdge','Phoenix_GMSTB','Phoenix_MC','Phoenix_MC_Hig','Phoenix_MSTB','Phoenix_SPT','Pin','PinHeader_1.00','PinHeader_1.27','PinHeader_2.00','PinHeader_2.54','PinSocket_1.00','PinSocket_1.27','PinSocket_2.00','PinSocket_2.54','RJ','SATA_SAS','Samtec','Samtec_HLE_SMD','Samtec_HLE_THT','Samtec_HPM_THT','Stocko','TE-Connectivit','USB'].map(s=>C+s)];
document.getElementById('libs-list').innerHTML=libs.map(s=>`<div>${s}</div>`).join('');
const smd='Capacitor_SMD:C_0603_1608M',cp='Capacitor_THT:CP_Radial_D7',ps=C+'PinSocket_2.54mm',led='LED_THT:LED_D5.0mm',res='Resistor_THT:R_Axial_DIN02';
const sy=[['C1','10pF',smd],['C2','10pF',smd],['C3','100nF',smd],['C5','100nF',smd],['C6','100nF',smd],['C7','100nF',smd],['C8','100nF',smd],['C9','100nF',smd],['C10','10uF',cp],['C11','100nF',smd],['C12','100nF',smd],['C13','1uF',smd],['C14','100nF',smd],['C15','10uF',cp],['C16','1uF',smd],
['D1','1N4004','Diode_THT:D_DO-41_SOD81_P1'],['D2','LED',led],['D3','LED',led],['J1','Screw_Terminal_01x02',C+'Phoenix_MC:P'],['J2','Conn_01x08',ps],['J3','Conn_01x08',ps],['J4','Conn_01x03',ps],['J5','Conn_01x08',ps],['J6','Conn_01x08',ps],['J7','AVR-ISP-6',C+'IDC:IDC-Header_2'],['J8','Conn_01x06_Socket',C+'PinSocket_2.54m'],['J9','Conn_01x05',ps],['J10','Conn_01x05',ps],
['R3','1k',res],['R4','10k',res],['R5','1k',res],['SW1','SW_Push','Button_Switch_THT:SW_PUSH_'],['U1','ATmega644PA-A','Package_QFP:TQFP-44_10x10m'],['U3','NCP718xSN500','Package_TO_SOT_SMD:SOT-23-'],['U4','MCP1755T-3302E/OT',''],['Y1','16MHz','Crystal:Crystal_HC49-4H_Ve']];
document.getElementById('sym-list').innerHTML=sy.map((r,i)=>
  `<div class="${i==32?'sel':i==34?'warn':''}" style="padding-left:6px">${String(i+1).padStart(3)} ${r[0].padStart(8)} - ${r[1].padStart(16)} : ${r[2]}</div>`).join('');
const rep=(k,s)=>Array(k).fill(s);
const fp=[...rep(3,C+'Dsub:DSUB-4'),C+'FFC-FPC:TE_',...rep(2,C+'Harwin:Harw'),...rep(2,C+'JAE:JAE_LY2'),...rep(2,C+'Molex:Molex'),...rep(6,C+'PinHeader_1'),...rep(6,C+'PinHeader_2'),...rep(6,C+'PinSocket_1'),...rep(4,C+'PinSocket_2'),C+'SATA_SAS:SA',...rep(9,C+'Samtec_HLE_'),'Package_DFN_QFN:OnSem','Package_LCC:PLCC-44','Package_LCC:PLCC-44_1','Package_LCC:PLCC-44_S','Package_LCC:PLCC-44_T','Package_QFP:LQFP-44_1','Package_QFP:MQFP-44_1','Package_QFP:PQFP-44_1','Package_QFP:TQFP-44_1','Package_SO:HTSSOP-44_'];
document.getElementById('fp-list').innerHTML=fp.map((s,i)=>`<div class="${i+2==52?'sel':''}" style="padding-left:6px">${String(i+2).padStart(3)} ${s}</div>`).join('');
// tracking that gives every label its nominal width
document.querySelectorAll('.txt[data-w]').forEach(e=>{
  const s=document.createElement('span');s.textContent=e.textContent;e.textContent='';e.append(s);
  const w=s.getBoundingClientRect().width;
  e.style.letterSpacing=((e.dataset.w-w)/s.textContent.length).toFixed(3)+'px';
});
</script>
</body>
</html>
